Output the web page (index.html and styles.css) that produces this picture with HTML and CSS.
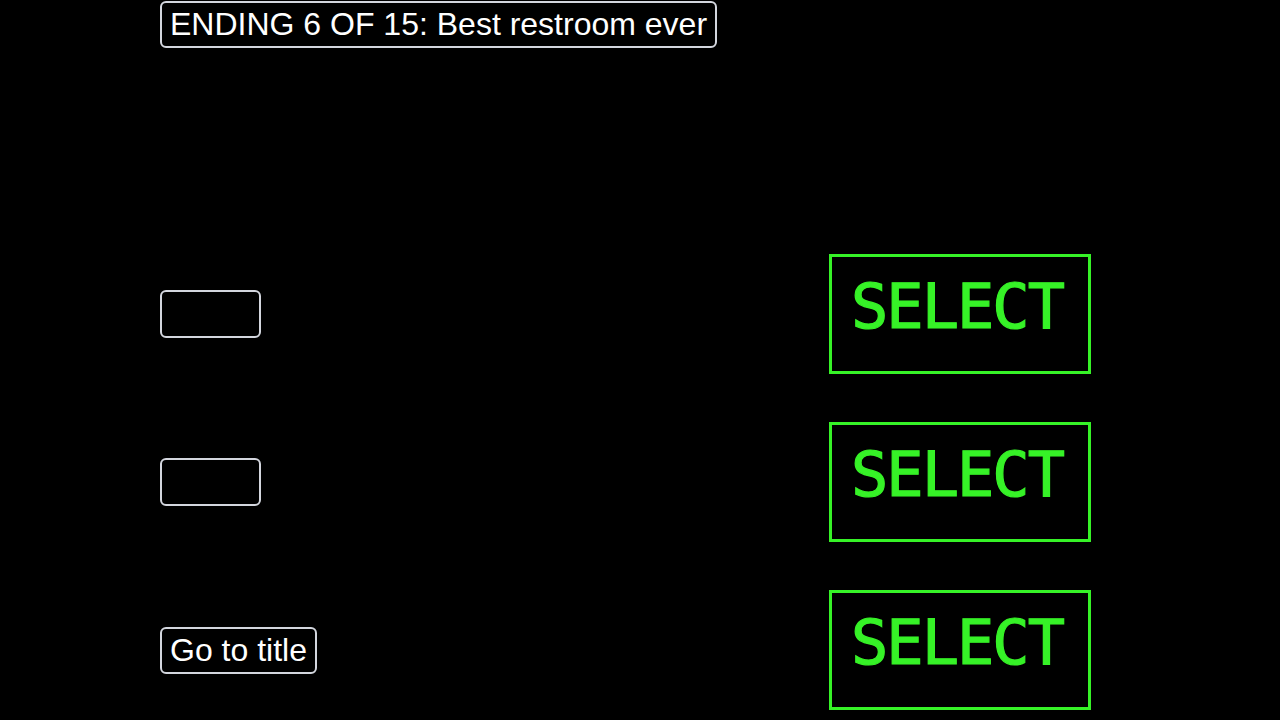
FILE: index.html
```html
<!DOCTYPE html>
<html>
<head>
    <meta charset="utf-8">
    <title>Ending 6</title>
    <link rel="stylesheet" href="styles.css">
</head>
<body>
    <div class="screen">
        <div class="ending-label">ENDING 6 OF 15: Best restroom ever</div>

        <div class="choices">
            <div class="choice-row">
                <button class="btn empty"></button>
                <button class="select">SELECT</button>
            </div>
            <div class="choice-row">
                <button class="btn empty"></button>
                <button class="select">SELECT</button>
            </div>
            <div class="choice-row">
                <button class="btn">Go to title</button>
                <button class="select">SELECT</button>
            </div>
        </div>
    </div>
</body>
</html>
```

FILE: styles.css
```css
* {box-sizing:border-box;}
html, body {margin:0;background:#000;}
body {font-family:"Liberation Sans", Arial, sans-serif;color:#fff;overflow:hidden;}
.screen {padding:1px 0 0 160px;height:720px;}

.ending-label {display:inline-block;height:47px;line-height:43px;padding:0 8px;font-size:32px;border:2px solid #d3d6de;border-radius:6px;}

.choices {margin-top:182px;}
.choice-row {display:grid;grid-template-columns:668px 262px;height:168px;align-items:center;}
.choice-row > * {justify-self:start;}
.choice-row > .select {margin-left:1px;}

.btn {height:47px;padding:0 8px;font-family:inherit;font-size:32px;line-height:43px;color:#fff;background:#000;border:2px solid #d3d6de;border-radius:6px;}
.btn.empty {width:101px;height:48px;}

.select {width:262px;height:120px;padding:0 0 16px;background:#000;border:3px solid #36f227;color:#36f227;font-family:"DejaVu Sans Mono", monospace;font-size:62px;-webkit-text-stroke:1.2px #36f227;letter-spacing:-2px;text-indent:-6px;}
```
